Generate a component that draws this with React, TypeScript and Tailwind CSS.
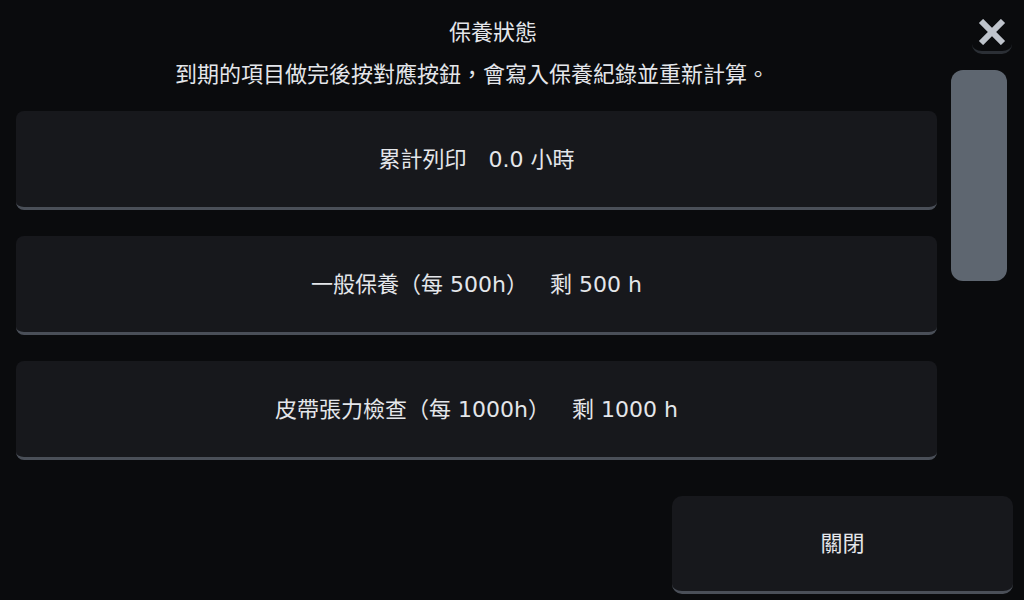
const font = { fontFamily: '"DejaVu Sans", "Noto Sans CJK TC", sans-serif' };

const items = [
  "累計列印　0.0 小時",
  "一般保養（每 500h）　剩 500 h",
  "皮帶張力檢查（每 1000h）　剩 1000 h",
];

export default function App() {
  return (
    <div
      lang="zh-TW"
      className="relative w-[1024px] h-[600px] overflow-hidden bg-[#0a0b0d] text-[#e4e6ea] [text-spacing-trim:space-all]"
      style={font}
    >
      {/* close icon */}
      <button className="absolute top-[12px] right-[12px] w-[40px] h-[42px] flex items-center justify-center rounded-b-[10px] border-b-[3px] border-[#2b2f35]">
        <svg width="28" height="26" viewBox="0 0 28 26" className="text-[#bfc4cc]">
          <path d="M3 2 L25 24 M25 2 L3 24" stroke="currentColor" strokeWidth="6" strokeLinecap="butt" />
        </svg>
      </button>

      <div className="flex">
        {/* content column */}
        <div className="w-[937px] pl-[16px]">
          <div className="flex flex-col items-center pt-[18px]">
            <div className="text-[22px] leading-[30px] pl-[33px]">保養狀態</div>
            <div className="text-[22px] leading-[30px] mt-[12px] -ml-[9px]">
              到期的項目做完後按對應按鈕，會寫入保養紀錄並重新計算。
            </div>
          </div>
          <div className="flex flex-col gap-[26px] mt-[21px]">
            {items.map((t) => (
              <div
                key={t}
                className="h-[99px] rounded-[8px] bg-[#17181c] border-b-[3px] border-[#4a4f58] flex items-center justify-center text-[22px]"
              >
                {t}
              </div>
            ))}
          </div>
        </div>

        {/* scrollbar */}
        <div className="pl-[14px] pt-[70px]">
          <div className="w-[56px] h-[211px] rounded-[12px] bg-[#5e6670]" />
        </div>
      </div>

      <div className="flex justify-end pr-[11px] mt-[36px]">
        <button className="w-[341px] h-[98px] rounded-[10px] bg-[#17181c] border-b-[3px] border-[#4a4f58] text-[22px] text-[#e4e6ea]">
          關閉
        </button>
      </div>
    </div>
  );
}
